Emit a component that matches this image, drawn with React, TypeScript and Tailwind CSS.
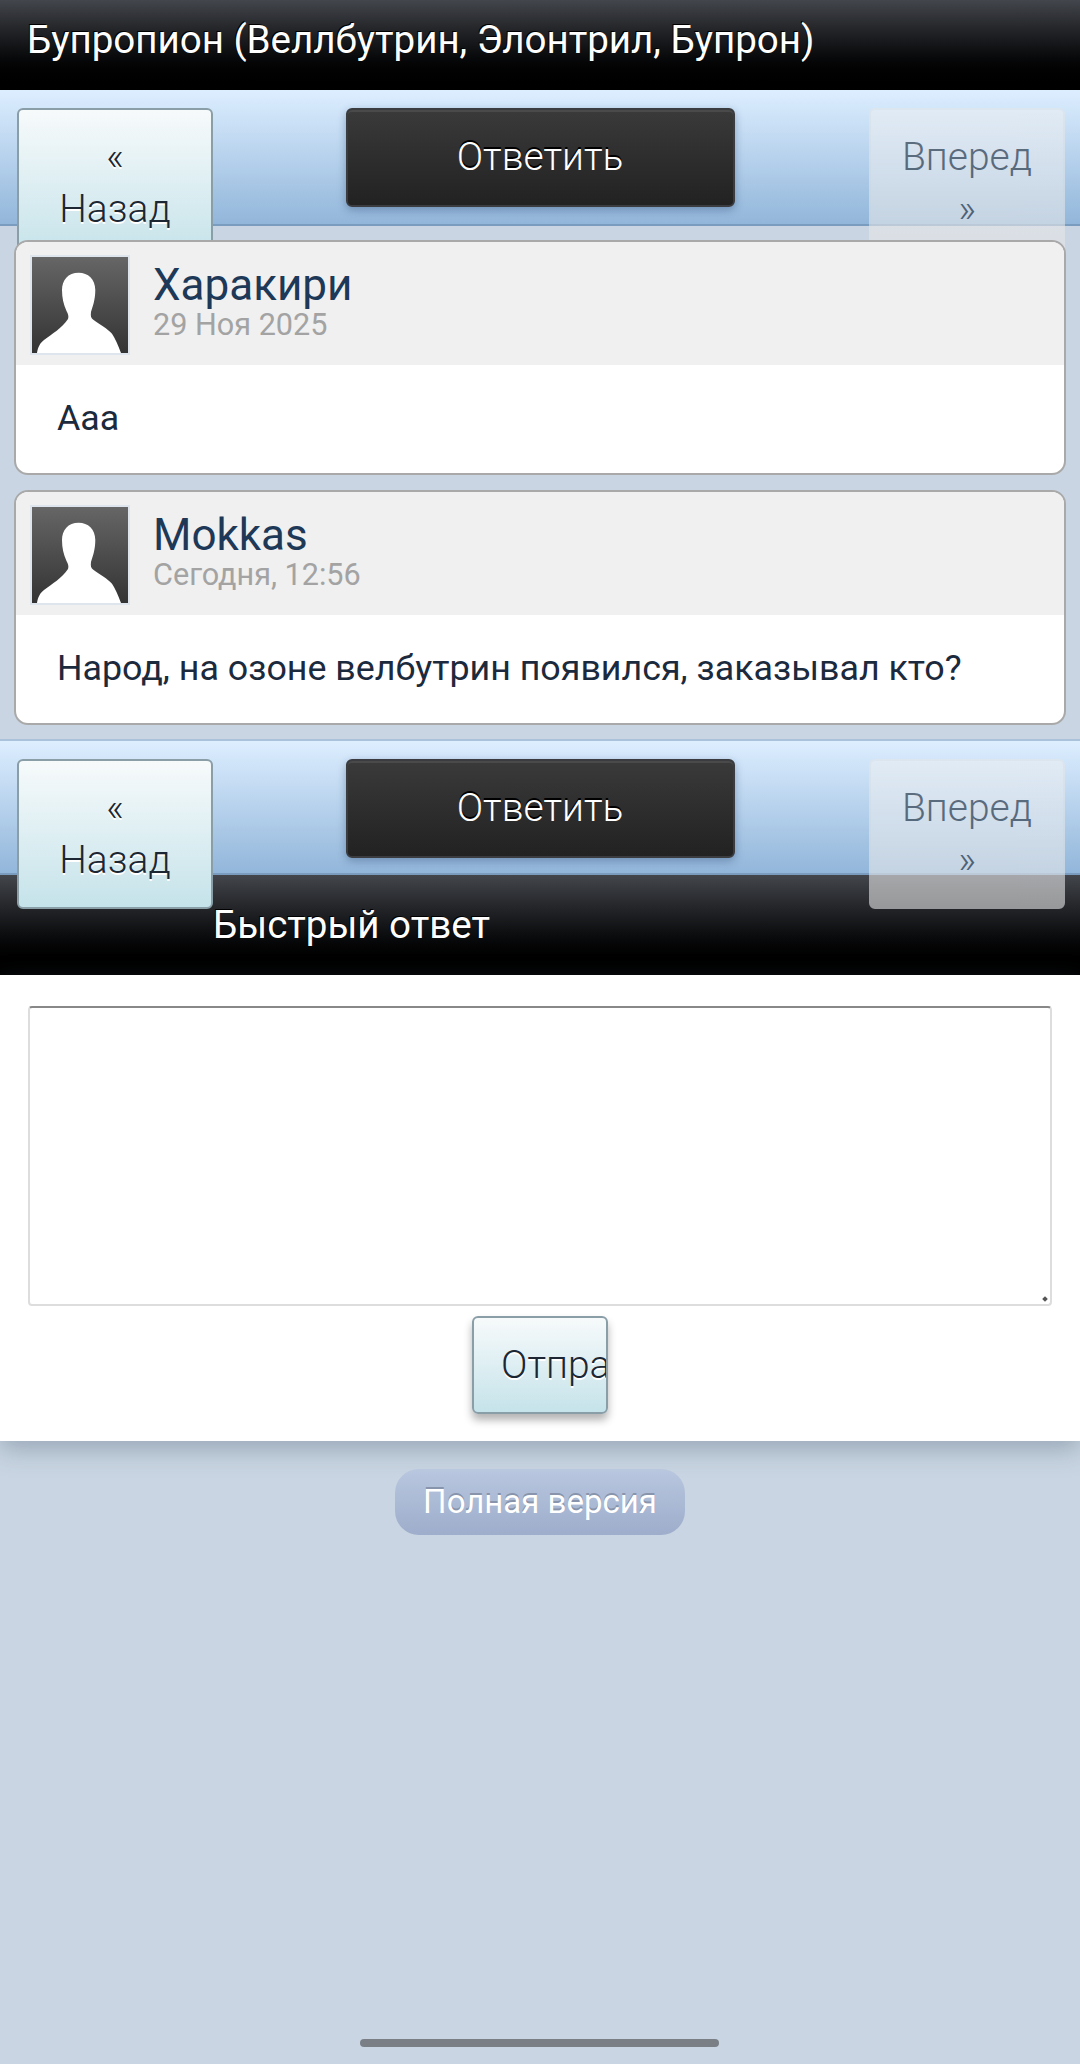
const font = { fontFamily: 'Roboto, "Noto Sans", sans-serif' };

function Avatar() {
  return (
    <div className="h-[100px] w-[100px] shrink-0 border-2 border-[#dfe5ec]">
      <svg viewBox="0 0 96 96" className="block h-full w-full">
        <defs>
          <linearGradient id="avatarBg" x1="0" y1="0" x2="0" y2="1">
            <stop offset="0" stopColor="#666666" />
            <stop offset="1" stopColor="#333333" />
          </linearGradient>
        </defs>
        <rect width="96" height="96" fill="url(#avatarBg)" />
        <path
          d="M46.7 15.7C56 15.7 63.3 22 63.3 33C63.3 43 60.5 50 59 55C58.5 59 59 61 61 62.5C67 67 76 72 80 76.7C83 81 86 88 89 96L5 96C6 90 8 86 12 83C20 77 30 71 36 62C37 59 36 57 34.5 54C31.5 47 30 41 30 33C30 23 36 15.7 46.7 15.7Z"
          fill="#ffffff"
        />
      </svg>
    </div>
  );
}

function Nav({ short }: { short?: boolean }) {
  return (
    <div
      className={`relative z-10 flex items-start justify-between border-b-2 border-[#7a9cbf] bg-gradient-to-b from-[#ddeeff] to-[#92b6da] pl-[17px] pr-[15px] pt-[18px] ${
        short ? 'h-[134px]' : 'h-[136px]'
      }`}
    >
      <button className="h-[150px] w-[196px] rounded-[6px] border-2 border-[#8a9ea8] bg-gradient-to-b from-[#f7fafb] to-[#c5e3ea] px-[30px] text-[39px] font-light leading-[52px] text-[#1c2733] [text-shadow:0_2px_0_#ffffff]">
        « Назад
      </button>
      <button className="mr-[2px] h-[99px] w-[389px] rounded-[6px] border-2 border-[#3a3c40] bg-gradient-to-b from-[#3a3a3a] to-[#222222] text-[39px] font-light text-white shadow-[0_3px_8px_rgba(40,70,110,0.4),inset_0_2px_0_#4a4a4a] [text-shadow:0_-2px_0_#000000]">
        Ответить
      </button>
      <button className="h-[150px] w-[196px] rounded-[6px] border-2 border-[#e4e6e8] bg-gradient-to-b from-[#ebeff3] to-[#e6e6e6] px-[30px] text-[39px] font-light leading-[52px] text-[#1c2733] opacity-60">
        Вперед »
      </button>
    </div>
  );
}

function Post({ name, date, text }: { name: string; date: string; text: string }) {
  return (
    <div className="overflow-hidden rounded-[14px] border-2 border-[#a9a9a9] bg-white">
      <div className="flex h-[123px] items-start gap-[23px] bg-[#f0f0f0] pl-[14px] pt-[13px]">
        <Avatar />
        <div>
          <div className="pt-[6px] text-[44px] leading-[48px] text-[#1e3858]">{name}</div>
          <div className="pt-[1px] text-[30.6px] leading-[30px] text-[#a3a3a3]">{date}</div>
        </div>
      </div>
      <div className="flex h-[108px] items-center pl-[41px] text-[35.8px] text-[#1c2a3d]">{text}</div>
    </div>
  );
}

export default function App() {
  return (
    <div className="relative h-[2064px] overflow-hidden bg-[#c9d5e2]" style={font}>
      <div className="flex h-[90px] items-center bg-gradient-to-b from-[#43464c] to-[#000000] pb-[10px] pl-[27px] text-[38.5px] text-white [text-shadow:-1px_-1px_0_#000000]">
        Бупропион (Веллбутрин, Элонтрил, Бупрон)
      </div>
      <Nav />
      <div className="relative z-20 flex flex-col gap-[15px] px-[14px] pt-[14px]">
        <Post name="Харакири" date="29 Ноя 2025" text="Ааа" />
        <Post name="Mokkas" date="Сегодня, 12:56" text="Народ, на озоне велбутрин появился, заказывал кто?" />
      </div>
      <div className="h-[14px]" />
      <div className="border-t-2 border-[#aac2da]">
        <Nav short />
      </div>
      <div className="flex h-[100px] items-center bg-gradient-to-b from-[#43464c] to-[#000000] pl-[213px] text-[38.5px] text-white [text-shadow:-1px_-1px_0_#000000]">
        Быстрый ответ
      </div>
      <div className="flex h-[466px] flex-col items-center bg-white px-[28px] pt-[31px] shadow-[0_8px_24px_rgba(60,80,100,0.35)]">
        <div className="relative h-[300px] w-full shrink-0">
          <textarea className="block h-full w-full resize-none rounded-[4px] border-2 border-[#dddddd] border-t-[#888888] bg-white outline-none" />
          <div className="absolute bottom-[5px] right-[5px] h-[4px] w-[4px] rotate-45 bg-[#555555]" />
        </div>
        <button className="mt-[10px] h-[98px] w-[136px] overflow-hidden whitespace-nowrap rounded-[6px] border-2 border-[#8a9ea8] bg-gradient-to-b from-[#f7fafb] to-[#c5e3ea] pl-[27px] text-left text-[39px] font-light text-[#1c2733] shadow-[0_6px_8px_rgba(0,0,0,0.3)] [text-shadow:0_2px_0_#ffffff]">
          Отправить
        </button>
      </div>
      <div className="flex justify-center pt-[28px]">
        <div className="flex h-[66px] w-[290px] items-center justify-center rounded-[24px] bg-gradient-to-b from-[#b9c7df] to-[#9dadcb] text-[33px] text-white [text-shadow:0_-2px_0_#8794ab]">
          Полная версия
        </div>
      </div>
      <div className="absolute bottom-[17px] left-[360px] h-[8px] w-[359px] rounded-full bg-[#7a7f86]" />
    </div>
  );
}
